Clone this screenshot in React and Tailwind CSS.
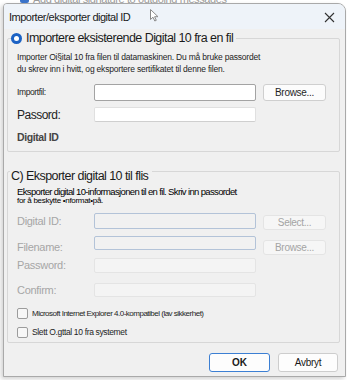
import React from "react";

function Radio() {
  return (
    <span className="flex h-[11px] w-[11px] items-center justify-center rounded-full bg-[#1c62c4]">
      <span className="h-[5px] w-[5px] rounded-full bg-white" />
    </span>
  );
}

function Check() {
  return <span className="h-[11px] w-[11px] shrink-0 rounded-[2px] border border-[#9c9c9c] bg-[#f7f7f7]" />;
}

function Btn({ children, disabled, className = "" }) {
  return (
    <button
      className={`w-[63px] rounded-[3px] border text-[10px] leading-none tracking-[-0.3px] ${
        disabled
          ? "border-[#e4e4e4] bg-[#f6f6f6] text-[#a4a4a4]"
          : "border-[#cfcfcf] bg-[#fcfcfc] text-[#1f1f1f]"
      } ${className}`}
    >
      {children}
    </button>
  );
}

export default function App() {
  return (
    <div className="h-[380px] w-[347px] overflow-hidden bg-white font-['Liberation_Sans',Arial,sans-serif]">
      {/* window behind, just peeking */}
      <div className="flex h-[3px] items-end gap-[4px] overflow-hidden pl-[20px] text-[#9a9a9a]">
        <span className="h-[8px] w-[9px] shrink-0 rounded-[2px] bg-[#3a73c9]" />
        <span className="shrink-0 text-[11px] leading-[8px] tracking-[-0.4px]">
          Add digital signature to outgoing messages
        </span>
      </div>

      <div className="ml-[3px] flex h-[374px] w-[343px] flex-col overflow-hidden rounded-tl-[4px] rounded-tr-[8px] border border-[#a9a9a9] bg-[#f0f0f0] shadow-[-2px_2px_4px_rgba(0,0,0,0.18)]">
        {/* title bar */}
        <div className="relative flex h-[25px] shrink-0 items-center justify-between bg-[#eef3f9] pl-[5px] pr-[10px] pt-[1px]">
          <span className="text-[11px] tracking-[-0.5px] text-[#1a1a1a]">Importer/eksporter digital ID</span>
          <svg className="absolute left-[146px] top-[5px]" width="9" height="13" viewBox="0 0 9 13">
            <path d="M0.5 0.5 L0.5 10.5 L3 8.2 L4.8 12 L6.3 11.3 L4.6 7.7 L8 7.7 Z" fill="#fff" stroke="#8a8a8a" strokeWidth="1" strokeLinejoin="round" />
          </svg>
          <svg width="11" height="11" viewBox="0 0 11 11">
            <path d="M1 1 L10 10 M10 1 L1 10" stroke="#333" strokeWidth="1.1" />
          </svg>
        </div>

        <div className="flex flex-col pl-[3px] pr-[5px]">
          {/* group 1 */}
          <div className="relative mt-[9px] flex flex-col rounded-[2px] border border-[#d7d7d7] pb-[7px] pl-[9px] pr-[6px]">
            <div className="absolute -top-[9px] left-[3px] flex items-center gap-[4px] bg-[#f0f0f0] pr-[3px]">
              <Radio />
              <span className="text-[12.5px] leading-[16px] tracking-[-0.55px] text-[#1b1b1b]">
                Importere eksisterende Digital 10 fra en fil
              </span>
            </div>
            <div className="mt-[12px] text-[8.5px] leading-[12px] tracking-[-0.2px] text-[#1e1e1e]">
              <div>Importer Oi§ital 10 fra filen til datamaskinen. Du må bruke passordet</div>
              <div>du skrev inn i hvitt, og eksportere sertifikatet til denne filen.</div>
            </div>
            <div className="mt-[9px] flex h-[17px] items-center">
              <span className="w-[77px] text-[8.5px] tracking-[-0.4px] text-[#1e1e1e]">Importfil:</span>
              <span className="h-[17px] w-[162px] rounded-[2px] border border-[#a3a3a3] bg-white" />
              <Btn className="ml-[7px] h-[17px]">Browse...</Btn>
            </div>
            <div className="mt-[6px] flex h-[15px] items-center">
              <span className="w-[77px] text-[12px] tracking-[-0.5px] text-[#222]">Passord:</span>
              <span className="h-[15px] w-[162px] rounded-[2px] border border-[#e0e0e0] border-b-[#cfcfcf] bg-white" />
            </div>
            <div className="mt-[8px] text-[10.5px] font-bold leading-[14px] tracking-[-0.4px] text-[#454545]">Digital ID</div>
          </div>

          {/* group 2 */}
          <div className="relative mt-[19px] flex flex-col rounded-[2px] border border-[#d7d7d7] pb-[4px] pl-[9px] pr-[6px]">
            <div className="absolute -top-[9px] left-[2px] bg-[#f0f0f0] pl-[1px] pr-[4px]">
              <span className="text-[12.5px] leading-[16px] tracking-[-0.55px] text-[#1a1a1a]">
                C) Eksporter digital 10 til flis
              </span>
            </div>
            <div className="mt-[14px] text-[9.5px] leading-[11px] tracking-[-0.65px] text-black">
              Eksporter digital 10-informasjonen til en fil. Skriv inn passordet
            </div>
            <div className="text-[8px] leading-[8px] tracking-[-0.3px] text-black">for å beskytte •nformat•på.</div>

            <div className="mt-[8px] flex h-[17px] items-start">
              <span className="w-[77px] self-center text-[11px] tracking-[-0.3px] text-[#a6a6a6]">Digital ID:</span>
              <span className="h-[16px] w-[162px] rounded-[2px] border-[1.5px] border-[#b3c3d8] bg-[#f1f1f1]" />
              <Btn disabled className="ml-[7px] mt-[2px] h-[15px]">Select...</Btn>
            </div>
            <div className="mt-[6px] flex h-[19px] items-start">
              <span className="mt-[3px] w-[77px] text-[11px] tracking-[-0.3px] text-[#a6a6a6]">Filename:</span>
              <span className="h-[14px] w-[162px] rounded-[2px] border-[1.5px] border-[#b3c3d8] bg-[#f1f1f1]" />
              <Btn disabled className="ml-[7px] mt-[4px] h-[15px]">Browse...</Btn>
            </div>
            <div className="mt-[3px] flex h-[15px] items-center">
              <span className="w-[77px] text-[11px] tracking-[-0.3px] text-[#a6a6a6]">Password:</span>
              <span className="h-[15px] w-[162px] rounded-[2px] border border-[#e4e4e4] bg-[#f4f4f4]" />
            </div>
            <div className="mt-[10px] flex h-[14px] items-center">
              <span className="w-[77px] text-[11px] tracking-[-0.3px] text-[#a6a6a6]">Confirm:</span>
              <span className="h-[14px] w-[162px] rounded-[2px] border border-[#e4e4e4] bg-[#f4f4f4]" />
            </div>
            <div className="mt-[11px] flex h-[11px] items-center gap-[4px]">
              <Check />
              <span className="text-[8px] tracking-[-0.5px] text-[#1e1e1e]">
                Microsoft Internet Explorer 4.0-kompatibel (lav sikkerhet)
              </span>
            </div>
            <div className="mt-[8px] flex h-[11px] items-center gap-[4px]">
              <Check />
              <span className="text-[8.5px] tracking-[-0.35px] text-[#1e1e1e]">Slett O.gttal 10 fra systemet</span>
            </div>
          </div>

          {/* footer */}
          <div className="mt-[10px] flex justify-end gap-[8px] pr-[2px]">
            <button className="h-[19px] w-[61px] rounded-[3px] border-[1.5px] border-[#3c7fd3] bg-[#fdfdfd] text-[10px] font-bold text-[#1a1a1a]">
              OK
            </button>
            <button className="h-[19px] w-[60px] rounded-[3px] border border-[#cdcdcd] bg-[#fdfdfd] text-[10px] tracking-[-0.3px] text-[#1a1a1a]">
              Avbryt
            </button>
          </div>
        </div>
      </div>
    </div>
  );
}
